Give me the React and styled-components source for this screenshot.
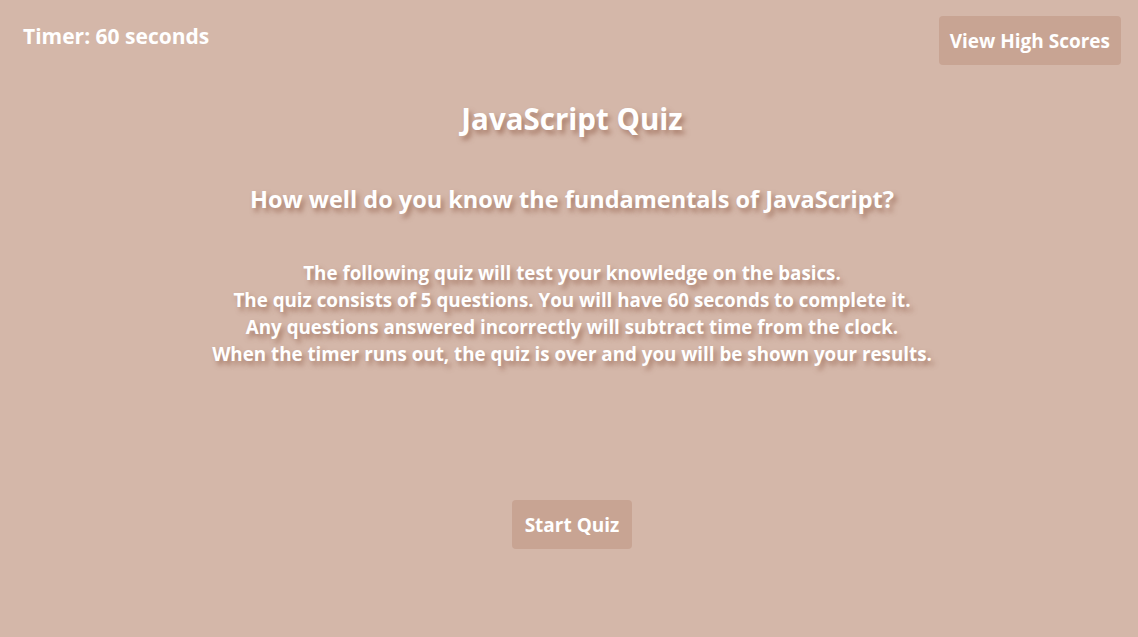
import React from 'react'
import styled, { createGlobalStyle } from 'styled-components'

const GlobalStyle = createGlobalStyle`
  body {
    margin: 0;
    background: #d4b7a9;
    font-family: "Open Sans", Lato, sans-serif;
    color: #ffffff;
  }
`

const Page = styled.div`
  min-height: 637px;
  display: flex;
  flex-direction: column;
`

const Header = styled.header`
  display: flex;
  justify-content: space-between;
  align-items: flex-start;
  padding: 16px 17px 0 23px;
`

const Timer = styled.div`
  font-size: 21px;
  font-weight: 700;
  line-height: 24px;
  margin-top: 8px;
`

const Button = styled.button`
  background: #c8a493;
  color: #ffffff;
  border: none;
  border-radius: 4px;
  font-family: inherit;
  font-size: 19px;
  font-weight: 700;
  height: 49px;
  padding: 0 ${props => props.$pad || 11}px;
  cursor: pointer;
`

const Content = styled.div`
  padding-left: 6px;
`

const Main = styled.main`
  display: flex;
  flex-direction: column;
  align-items: center;
  text-align: center;
  text-shadow: 3px 4px 5px rgba(150, 100, 80, 0.7);
`

const Title = styled.h1`
  font-size: 29.5px;
  font-weight: 700;
  line-height: 36px;
  margin: 36px 0 0;
`

const Subtitle = styled.h2`
  font-size: 23.5px;
  font-weight: 700;
  line-height: 30px;
  margin: 47px 0 0;
`

const Intro = styled.p`
  font-size: 18.8px;
  font-weight: 700;
  line-height: 27px;
  margin: 46px 0 0;
`

const StartRow = styled.div`
  display: flex;
  justify-content: center;
  margin-top: 132px;
`

const App = () => (
  <Page>
    <GlobalStyle />
    <Header>
      <Timer>Timer: 60 seconds</Timer>
      <Button>View High Scores</Button>
    </Header>
    <Content>
      <Main>
        <Title>JavaScript Quiz</Title>
        <Subtitle>How well do you know the fundamentals of JavaScript?</Subtitle>
        <Intro>
          The following quiz will test your knowledge on the basics.<br />
          The quiz consists of 5 questions. You will have 60 seconds to complete it.<br />
          Any questions answered incorrectly will subtract time from the clock.<br />
          When the timer runs out, the quiz is over and you will be shown your results.
        </Intro>
      </Main>
      <StartRow>
        <Button $pad={13}>Start Quiz</Button>
      </StartRow>
    </Content>
  </Page>
)

export default App
